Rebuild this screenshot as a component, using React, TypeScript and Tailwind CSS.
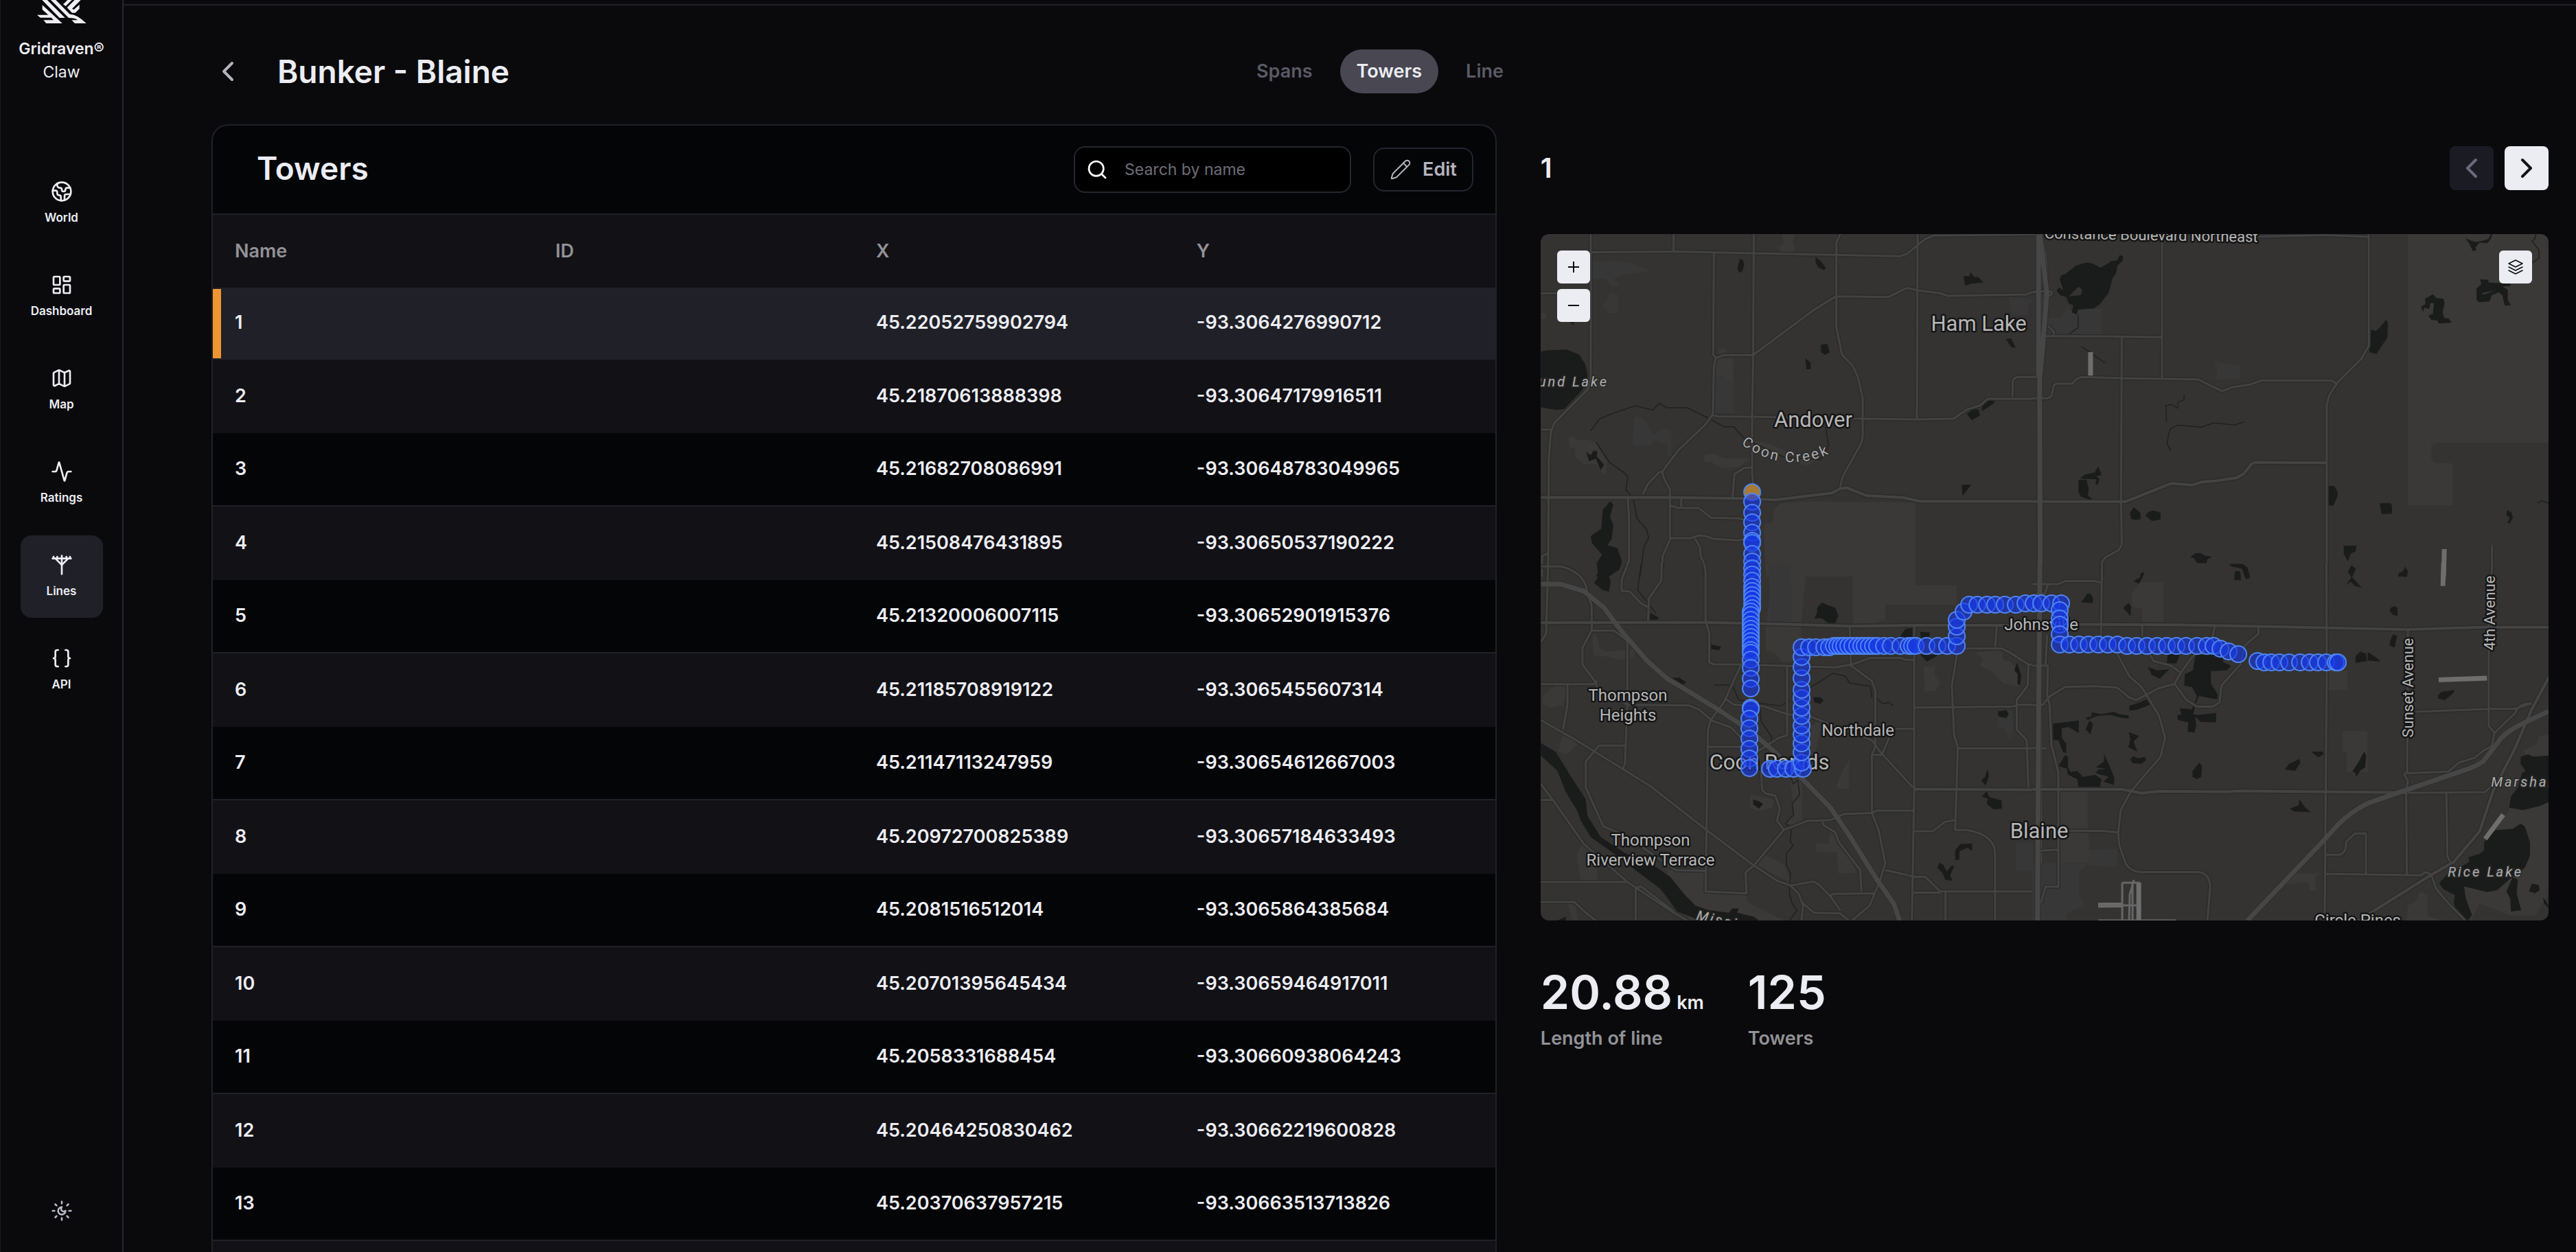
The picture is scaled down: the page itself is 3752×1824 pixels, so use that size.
import React from "react";
import {
  Activity,
  Braces,
  ChevronLeft,
  ChevronRight,
  Earth,
  LayoutDashboard,
  Map as MapIcon,
  Pencil,
  Search,
  UtilityPole,
} from "lucide-react";

const navItems = [
  { label: "World", icon: Earth },
  { label: "Dashboard", icon: LayoutDashboard },
  { label: "Map", icon: MapIcon },
  { label: "Ratings", icon: Activity },
  { label: "Lines", icon: UtilityPole, active: true },
  { label: "API", icon: Braces },
];

const tabs = [
  { label: "Spans" },
  { label: "Towers", active: true },
  { label: "Line" },
];

const towers = [
  { name: "1", x: "45.22052759902794", y: "-93.3064276990712" },
  { name: "2", x: "45.21870613888398", y: "-93.30647179916511" },
  { name: "3", x: "45.21682708086991", y: "-93.30648783049965" },
  { name: "4", x: "45.21508476431895", y: "-93.30650537190222" },
  { name: "5", x: "45.21320006007115", y: "-93.30652901915376" },
  { name: "6", x: "45.21185708919122", y: "-93.3065455607314" },
  { name: "7", x: "45.21147113247959", y: "-93.30654612667003" },
  { name: "8", x: "45.20972700825389", y: "-93.30657184633493" },
  { name: "9", x: "45.2081516512014", y: "-93.3065864385684" },
  { name: "10", x: "45.20701395645434", y: "-93.30659464917011" },
  { name: "11", x: "45.2058331688454", y: "-93.30660938064243" },
  { name: "12", x: "45.20464250830462", y: "-93.30662219600828" },
  { name: "13", x: "45.20370637957215", y: "-93.30663513713826" },
  { name: "", x: "", y: "" },
];

function Logo() {
  return (
    <svg viewBox="40 0 216 102" className="h-[34px] w-[72px]" fill="#eeeef4" aria-hidden="true">
      <path d="M62 0H84L162 78H138Z" />
      <path d="M100 0H122L183 62Q214 62 255 102H205L191 88H218Q206 78 178 78Z" />
      <path d="M63 22L150 102H80L68 88H112L102 77H54L40 65H89L63 42Z" />
      <path d="M154 19L173 0H192L165 27Z" />
      <path d="M171 33L204 0H231L193 38L201 42L225 20V38L207 56H193Z" />
    </svg>
  );
}

function ThemeIcon() {
  return (
    <svg
      viewBox="0 0 24 24"
      className="size-8"
      fill="none"
      stroke="currentColor"
      strokeWidth={2}
      strokeLinecap="round"
      strokeLinejoin="round"
      aria-hidden="true"
    >
      <path d="M12 8a2.83 2.83 0 0 0 4 4 4 4 0 1 1-4-4" />
      <path d="M12 2v2M12 20v2M4.9 4.9l1.4 1.4M17.7 17.7l1.4 1.4M2 12h2M20 12h2M6.3 17.7l-1.4 1.4M19.1 4.9l-1.4 1.4" />
    </svg>
  );
}

function Sidebar() {
  return (
    <aside className="flex w-[180px] shrink-0 flex-col items-center border-r-2 border-l border-[#26262e] border-l-[#1c1c20] pb-11">
      <Logo />
      <div className="mt-5 text-center text-[23px] leading-[34px]">
        <div className="font-semibold">Gridraven®</div>
        <div>Claw</div>
      </div>
      <nav className="mt-[114px] flex flex-col gap-4">
        {navItems.map(({ label, icon: Icon, active }) => (
          <a
            key={label}
            href="#"
            className={
              active
                ? "flex size-[120px] flex-col items-center gap-2.5 rounded-2xl bg-[#202128] pt-[27px]"
                : "flex size-[120px] flex-col items-center gap-2.5 rounded-2xl pt-[27px]"
            }
          >
            <Icon size={32} strokeWidth={2} />
            <span className="text-[17px] leading-6 font-semibold">{label}</span>
          </a>
        ))}
      </nav>
      <button type="button" aria-label="Toggle theme" className="mt-auto text-[#b9b9c6]">
        <ThemeIcon />
      </button>
    </aside>
  );
}

function TowersTable() {
  return (
    <section className="overflow-hidden rounded-t-3xl border-2 border-b-0 border-[#202128] bg-[#040507]">
      <div className="flex h-[130px] items-center border-b-2 border-[#202128] pr-8 pl-16">
        <h2 className="pb-1 text-[46px] font-semibold">Towers</h2>
        <div className="ml-auto flex items-center gap-8">
          <label className="flex h-[68px] w-[404px] items-center gap-6 rounded-2xl border-2 border-[#25262e] bg-black pr-4 pl-4">
            <Search size={32} className="shrink-0 text-white" />
            <input
              type="text"
              aria-label="Search by name"
              placeholder="Search by name"
              className="w-full min-w-0 bg-transparent text-[23px] outline-none placeholder:text-[#6d6d78]"
            />
          </label>
          <button
            type="button"
            className="flex h-16 items-center gap-4 rounded-2xl border-2 border-[#25262e] px-[22px] text-[27px] font-semibold text-[#b4b4c0]"
          >
            <Pencil size={32} strokeWidth={1.5} />
            Edit
          </button>
        </div>
      </div>
      <table className="w-full table-fixed text-left text-[27px] font-semibold">
        <thead>
          <tr className="h-[106px] bg-[#121116] text-[#929297]">
            {["Name", "ID", "X", "Y"].map((h) => (
              <th key={h} scope="col" className="pl-8 font-semibold">
                {h}
              </th>
            ))}
          </tr>
        </thead>
        <tbody>
          {towers.map((t, i) => (
            <tr
              key={i}
              className={
                i === 0
                  ? "h-[104px] bg-[#202128]"
                  : i % 2 === 1
                    ? "h-[108px] border-t-2 border-[#202128] bg-[#121116]"
                    : "h-[106px]"
              }
            >
              <td className="relative pl-8">
                {i === 0 && <span className="absolute top-0.5 bottom-0 left-0 w-3 bg-[#ef9631]" />}
                {t.name}
              </td>
              <td className="pl-8" />
              <td className="pl-8">{t.x}</td>
              <td className="pl-8">{t.y}</td>
            </tr>
          ))}
        </tbody>
      </table>
    </section>
  );
}

type Tile = {
  matrix: string;
  parks: string;
  urban: string;
  water: string;
  streams: string;
  roads: string;
  arterials: string;
  highways: string;
  runways: string;
};

const tiles: Tile[] = [
  {
    matrix: "matrix(0.48469 0 0 0.33333 -24 -21)",
    parks:
      "M775 63H815L807 95L814 140L770 142L765 120L780 105Z M585 567H608V590H585Z M572 605H629L627 715L600 705L595 685L572 683Z M135 948L170 965L185 960L215 972L225 1000L250 1060L244 1118L215 1070L180 1068L153 1040V1000L135 993Z M540 1030L565 1022L600 1042L680 1045L645 1080L598 1087L560 1058L543 1062Z M690 965L740 980L800 1020L880 1045L855 1075L800 1060L740 1015L700 1000Z M50 408H70L63 434H50Z M720 1330L745 1325L750 1270L770 1240L880 1230L935 1235H1175V1560H725Z",
    urban:
      "M205 180L240 185L260 178L325 190L380 225L290 240L270 260L290 290L268 294L240 258L205 262Z M260 322L285 330V408H252L236 375Z M572 685L600 690L629 715V845H572Z M330 865Q350 850 365 885L390 940L425 908L443 925V1040L432 1030V985L390 960L383 988L325 990Z M1455 335L1530 350L1512 380L1515 418H1462Z",
    water:
      "M50 577L70 571L130 568L165 590L183 630L190 670V700L175 745L120 828L95 832L50 820Z M258 1231L268 1245L258 1300L268 1335L263 1395L250 1423L280 1435L293 1490L285 1530L255 1560H215L222 1545L218 1500L234 1465L203 1412L200 1383L232 1350L236 1268Z M648 171L658 178L661 200L655 230H645L640 215Z M875 162L893 185L907 212L900 221L885 210L876 190Z M1320 248L1338 246L1341 229L1352 250L1365 252L1380 275L1345 280L1325 288Z M892 546L911 543L918 580L905 591L892 580Z M845 606L861 625V654H848Z M1447 522L1463 518L1477 560L1464 558Z M1330 850L1350 826L1365 830L1370 855L1345 877Z M1395 789H1415L1410 805L1375 837L1377 815Z M1315 1158H1344L1317 1208Z M186 1014L200 1030L209 1009L220 1013L218 1035L240 1070L230 1095L215 1045L195 1055Z M138 448H150L147 462Z",
    streams:
      "M200 923L227 870L270 845L333 814L387 832L406 802L427 822H490L560 873L600 905H630L660 955L780 1038L890 1050L915 990L905 905 M216 972L257 1062L298 1103L311 1122L306 1182L327 1215L339 1306L367 1352L374 1390L360 1430L348 1560",
    roads:
      "M200 63V700L192 740L90 890L80 930L74 1050L72 1560 M449 63V135 M200 143L460 140L690 147L930 154L1128 160L1150 150L1205 85L1228 70L1568 64 M690 63L688 590L685 860V1110L688 1160 M950 63L938 100V470L955 590L988 640L1003 690L1017 780V950L1012 980L958 1120L949 1170 M1182 63V120L1180 870 M570 147L568 590L576 605L600 592H688L870 395L937 335L1095 338L1140 305L1155 299L1180 308L1250 322L1272 333L1510 327L1535 312H1568 M576 605L570 640L567 850L545 895L465 1005L425 1080L415 1105L420 1130L438 1180V1400L416 1470L413 1560 M415 1100L405 1105L372 1155L357 1200 M562 855L585 860L700 862L1018 870L1180 873L1290 870L1330 830L1370 812L1393 783H1568 M1467 775L1468 710Q1470 690 1485 688H1535L1545 670 M50 322H100 M50 917H80 M686 1083L662 1085L632 1112L626 1215 M472 1215V1255 M440 1250L460 1259L525 1261L562 1303L645 1306L660 1312 M437 1392H500L525 1380L545 1383L568 1395L640 1402L660 1398 M513 1393L528 1430L530 1470L540 1500L543 1560 M311 1215L315 1300V1490L300 1540L293 1560 M50 1515H110Q150 1530 170 1560 M54 1560V1470L70 1460",
    arterials:
      "M50 1214H440L660 1219L755 1225L925 1195L950 1175L970 1172L1028 1206L1140 1215L1190 1231H1568",
    highways: "M1549 63V1560 M1549 63L1562 150L1568 260L1560 560L1550 700",
    runways: "",
  },
  {
    matrix: "matrix(0.5051 0 0 0.33333 716 -21)",
    parks:
      "M1083 63H1489V975H1165L1151 985V1050L1160 1064H1211V1248H1083Z",
    urban: "M45 432L80 430L97 405L95 360L110 400L130 395L200 388V505H45Z M524 618L560 632L600 635V698H528L535 660Z",
    water:
      "M155 188L175 192L197 210L228 182L245 178L252 155L262 160L260 180L245 202L242 232L232 255L220 320L195 370L178 388L132 393L128 415L114 405L118 375L105 365L98 338L80 330L70 310L78 297L90 310L79 262L85 242L95 238L125 202ZM105 335L140 330L144 310L137 295L130 298Z M1020 438L1025 450L1024 515L992 587L972 580V490L980 480L990 487L1000 475Z M1155 326L1165 343L1185 345L1189 365L1183 405L1188 430L1200 432L1210 450L1172 454L1168 440L1150 438L1142 420L1155 410L1158 365L1148 365L1145 390L1130 385L1127 405L1121 380L1133 370V345Z M1291 261L1315 263V275L1345 278L1380 280L1378 290L1355 292L1371 306V350L1380 375H1362L1355 330L1345 318L1325 330L1318 358L1287 360L1281 350V300L1295 283ZM1296 320L1335 310L1300 328Z M1250 82L1265 92L1280 98L1300 92L1315 85L1322 63H1326L1322 85L1312 103L1290 100L1278 122L1280 135L1270 137L1262 110Z M190 1078L200 1117L185 1120L194 1135L188 1160L182 1155L185 1135L138 1132L150 1115L180 1105Z M133 1138L156 1136L163 1178L160 1205L172 1220L163 1223L140 1210L133 1190Z M293 1257L312 1282L313 1308L300 1313L285 1308L281 1280Z M350 1271L370 1280V1310L345 1317L327 1295Q330 1275 350 1271Z M853 1163L872 1165L882 1200L868 1250L853 1247Z M1002 1240L1033 1238L1037 1250V1285L1007 1288Z M1370 1269L1382 1280L1386 1303L1376 1328L1370 1325L1377 1303L1366 1290Z M898 1425H935L932 1450L918 1460L910 1495L898 1460Z M455 1475L470 1458L485 1457L500 1470L518 1472L505 1485L502 1502L475 1500L465 1478Z M920 1511L933 1525L922 1560L910 1540Z M568 1505H605L620 1520L628 1560H615L605 1525L575 1515Z M585 1536H598L602 1560H583Z M1075 1518L1083 1535L1080 1560H1055L1057 1545L1068 1540Z M320 1538L322 1555H308Z",
    streams:
      "M1451 63V80L1441 95L1460 130L1462 168L1440 190 M132 415V472L107 500 M141 554L210 627 M438 765V787L421 797L419 824L403 808L385 813L387 885 M611 884L583 898L523 888L488 907L418 898L397 916L388 977L399 1010 M1457 1238L1468 1228L1489 1240",
    roads:
      "M374 92V690 M970 63V552L948 610L880 712L857 765L849 810V1560 M620 75L850 68L970 75 M258 515L256 1230L258 1420L250 1443L212 1475L201 1495V1560 M40 509L200 510L375 514 M46 465L62 490V503 M0 318L15 313L55 315L57 325L45 335 M0 688H10L18 670 M0 781H45L55 772L62 725L68 717H115L127 697L140 688L257 693L478 698L545 748L553 747L575 733L630 720L660 703H862L878 717 M1326 1422L1324 1560",
    arterials:
      "M0 1232H270L400 1153L462 1160L488 1147L525 1142L590 1128L610 1110L632 1068L642 1061L849 1063",
    highways: "M22 63L42 320L30 560L21 700L23 1560 M18 63V680",
    runways: "M168 579V682 M1188 1440L1186 1560",
  },
  {
    matrix: "matrix(0.48469 0 0 0.34439 -24 479)",
    parks:
      "M750 0H850L832 265L830 420H775L750 380L725 370V270L735 180Z M985 0H1175V95H1300V178H1085V240L1050 258H988Z M205 300L220 315L225 360L250 375L330 365V400L290 410L240 395L208 392Z M55 560L95 520L130 515L118 600L80 612L55 600Z M1200 437L1235 440V480L1250 505L1238 540L1203 547Z M1355 380L1410 370L1435 375L1440 410L1460 420L1485 455V522L1440 510L1405 460L1370 435L1380 405Z M980 830L960 870L938 945L942 955H976V870Z M175 1185L158 1240L170 1343H220V1240Z M430 1290L545 1305V1390L670 1400V1435L780 1513H500L430 1400Z M875 1185L915 1188L920 1140L940 1150L1000 1310L943 1313L940 1225L878 1222Z M800 915H835V1090L800 1110L785 1100L810 1060Z M680 980L715 990L750 1000L745 1035L710 1050L678 1035Z M725 1235L780 1275L800 1350L760 1325L700 1280Z M130 720L165 760L130 810L102 800L112 740Z M895 660L880 780L862 840V690Z M130 1440L155 1450L160 1513H145Z",
    urban:
      "M735 0H800L805 250H740Z M1425 620H1465L1470 700L1460 750L1440 700L1420 690Z M1478 1185H1530V1305H1478Z",
    water:
      "M50 762L95 800L130 880L185 1000L190 1070L230 1160L300 1225L400 1290L440 1330L480 1400L515 1450L550 1468L615 1480L625 1462H645L640 1480L670 1490L690 1497L705 1513H530L460 1475L410 1380L330 1295L270 1230L200 1160L170 1090L160 1050L125 970L100 880L50 815Z M220 0H293L285 30L250 48L260 75L255 122L235 115L210 85L222 60Z M895 168L910 178L935 190L944 225L935 255L915 257L895 235L872 235L880 212L880 190Z M377 210L405 232L400 240L375 240Z M558 345L592 355L585 370L562 365Z M443 488L465 485L487 505L478 515Z M868 568L890 568L900 582L890 597L872 590Z M688 1001L705 1008L718 1020L705 1040L688 1022Z M1130 310L1145 280L1168 275V315H1130Z M1190 292L1220 295L1215 318H1192Z M1190 388L1245 390L1210 418Z M1480 422L1488 450L1494 480L1490 517L1482 512L1483 470L1473 455Z M1423 628L1450 623L1456 640L1448 657L1425 650Z M1392 872L1397 900L1387 942L1373 920L1385 905Z M1390 966L1397 990L1435 1005V1040L1410 1042L1390 1020L1393 998L1375 988Z M1346 1187V1218L1332 1205L1308 1220V1255L1295 1258V1215L1310 1190Z M1248 1268L1260 1280L1270 1305L1285 1280L1292 1285L1280 1320L1287 1345L1265 1340L1258 1315L1242 1290Z M100 1513L125 1497V1513Z",
    streams:
      "M352 0L341 115L397 215 M570 517H625L645 580L690 590L770 605L798 582 M708 620L712 670L743 735V790L800 900L808 935L822 920L828 980L805 1020L810 1065L785 1103L803 1120L800 1180L808 1195L788 1230V1280L800 1310L797 1400L805 1440L820 1470L797 1513 M857 530L928 467L965 480L978 508L1040 522L1045 570 M1060 573L1076 595L1097 590L1108 603",
    roads:
      "M72 0L66 300L50 335 M50 15H110Q185 40 190 130L203 180V285L175 360V430L215 505L220 530L310 600L495 603L525 620L565 668L620 695L660 750 M310 10L293 70V118L318 122L350 170L370 187 M413 0L412 75L375 150L372 245 M540 0L545 35V240L556 300V420L570 430H652L935 442L985 430L1040 402H1130L1145 410H1170 M200 287H270L310 330V600L303 850L295 875 M50 513H210L220 500 M130 517V600L117 705 M655 420L600 590L560 665L552 710L548 1130L545 1390L668 1398L665 1310L690 1280 M605 575L630 600L720 607L790 640L860 650L1045 750 M790 435V730L765 740L705 795 M50 665L150 745L380 945L548 1130L690 1280L760 1345L800 1365L825 1400L838 1450L833 1513 M305 773H225L185 840V950L238 1115L300 1150L455 1300L545 1303 M50 935L90 1010L180 1190L310 1350L450 1480L490 1513 M50 1003H88 M50 1350H310 M335 1513V1375L350 1368L450 1475 M50 1434H150L185 1480L215 1513 M553 778H650 M712 880L715 960L725 975L755 985L768 1040L760 1090L780 1130L690 1280 M780 1130L850 1092L920 1088L960 1063L1045 1058L1060 1048H1168 M895 1090L900 1110L935 1140L945 1180L1010 1300L1013 1390 M1045 1058L1065 1130L1085 1270L1070 1340L1038 1450L985 1513 M800 1365L870 1348L885 1360L920 1410L950 1470 M838 1440L870 1480L950 1483L975 1513 M915 1410L930 1400L1050 1398 M1085 1300L1135 1315L1170 1328H1205L1250 1390H1568 M1172 260V950L1165 1513 M978 268L982 435L1045 500L1055 540V780L1045 810V1058 M1045 750L1070 800L1168 950 M1045 812H1075L1105 710L1120 702H1170 M1300 390L1285 520L1292 730L1303 780L1295 1130H1330Q1415 1150 1415 1230V1513 M1172 1135H1228L1265 1095L1295 1088 M1305 785H1568 M1172 612L1465 608L1490 600H1568 M1420 265L1415 355 M1320 362H1435L1460 380L1515 430H1568 M1515 435L1513 520L1480 580V705L1510 750L1515 950 M1266 1395V1513 M1170 1395H1250",
    arterials:
      "M50 253L545 252L720 257L980 268L1175 264H1568 M1170 957L1568 960",
    highways:
      "M50 90H110L180 120L240 190L290 285L370 415L430 490L560 600L680 710L760 810L840 920L920 1035L980 1160L1060 1340L1110 1440L1128 1513 M1549 0V1513",
    runways: "",
  },
  {
    matrix: "matrix(0.5051 0 0 0.34439 716 479)",
    parks:
      "M313 81H378V252H317V195L287 185V128Z M895 710L966 712V885H907V805L895 795Z M855 455H909V537H855Z M80 965H160V1120L165 1215L245 1210L160 1270H80Z M1385 1020L1489 1010V1400L1450 1493H1380L1290 1440L1265 1513L1240 1370L1340 1120L1360 1080Z M1489 725L1460 735L1455 765L1415 795L1425 815L1489 820Z M760 1313H835L815 1330L820 1385H800L795 1350L730 1362Z M1078 1513L1083 1450L1105 1430L1120 1390L1140 1410V1493L1180 1513Z",
    urban: "M0 1270H160L135 1310V1400L150 1450L100 1480V1513H0Z M165 1215L245 1210V1285L165 1280Z",
    water:
      "M1408 820L1430 810L1445 820L1489 815V1012L1460 1030L1415 1046L1375 1035L1380 990L1400 950L1412 890L1423 880L1408 850Z M1408 1103L1420 1115L1435 1180V1240L1420 1290L1375 1340L1340 1385L1310 1392L1245 1368L1250 1420L1268 1490L1255 1513L1230 1490L1215 1440L1218 1405L1185 1380L1173 1355L1195 1320L1260 1265L1258 1245L1290 1230L1303 1215V1180L1335 1130L1385 1125Z M1385 1330L1400 1340L1397 1400L1410 1470L1380 1475L1378 1420L1367 1390Z M1440 1357L1460 1362L1463 1385L1450 1397L1432 1390Z M1473 1415L1489 1450V1460L1475 1440Z M390 385L425 390L415 425L388 425Z M470 390L550 388V420L573 435L560 455L515 458V510L535 558L533 578L480 563L470 600L465 640L480 643L530 635V675L485 673L470 650L473 690L467 718L448 715L450 675L420 665L418 645L430 640L425 615L460 620L475 565L460 525L438 520L440 470L463 455Z M333 440L360 455L395 450L368 490L345 475Z M335 575L340 600L300 622L280 625V605L310 590Z M172 632L200 640L235 630L250 640L278 645V658L255 655L225 643L185 648L160 665L155 655L170 650Z M165 668L175 680L168 725L153 705Z M60 680L134 667V720L105 695L85 700V740L98 765V805L88 800L75 750H60Z M95 812L103 820V865L110 885L130 880L145 905L182 897L200 915L195 948H133L130 915L102 895L100 870L75 860Z M207 808L220 850L237 910L235 940L205 925L220 905L183 890L190 875L215 870L183 865L207 840Z M278 715L308 733L292 755L303 798L277 780L283 745Z M290 817L305 827L325 820L328 835L315 850L290 848L282 833Z M482 845L490 860L487 905L475 915L462 905V880Z M158 130H168L175 150V170L140 167L150 150Z M278 170L285 185L283 225L262 190Z M320 36L318 60L308 88L292 78L310 62Z M583 40H598L602 73H583Z M568 5H608L620 20L628 65L615 68L605 25L575 15Z M920 12L933 25L922 60L950 105L930 98L918 80L905 95L920 60L910 40Z M1075 17L1083 40L1078 60L1055 52L1057 42L1068 38Z M1033 190L1045 183L1053 190V225L1040 220L1030 203Z M1040 303L1052 308L1045 358L1030 350L1032 330Z M932 395L945 375L962 383L965 415L932 423Z M967 377L980 390L1001 410V418L967 413Z M1180 545L1217 538L1215 550L1190 580L1170 575V560Z M805 800L835 798L841 808L825 823Z M728 875L740 850L770 830L773 845L758 880Z M957 797L963 815L960 865L945 880L935 905L930 885H922L940 845Z M770 1000L787 1035L803 1055L755 1052L742 1040L768 1025Z",
    streams: "",
    roads:
      "M201 0L198 310 M0 90H75L95 77H180L200 85 M45 90L37 130L0 135 M317 265V310 M527 265L520 310L460 400L428 465L410 510 M652 272V300L612 350L600 430L545 520L540 590L520 608H475L445 580L410 512L365 530L320 565L300 580L280 570L245 528L180 522L95 525L50 565L30 600L0 602 M245 385L280 480L315 525L365 645L383 740L370 820L285 965L255 1045L248 1140L250 1190L270 1275Q285 1305 310 1308H480Q512 1315 513 1370L505 1513 M340 390L350 415L400 435L428 465 M0 435H45L43 560L50 600L55 770L75 885V1370H38L25 1440 M43 305L38 430 M848 0L849 460L843 1513 M1083 280L1081 885L1072 895L1083 920L1078 970L1080 1320 M1326 0L1316 280V690L1333 720L1325 775L1300 795L1275 825L1230 845L1200 883L1081 890 M1105 630L1315 618H1390L1440 595 M1333 720L1360 680L1390 640Q1405 590 1440 595 M1083 973L1305 970L1320 950 M1194 975L1197 1240L1205 1265 M847 1235H885Q905 1230 905 1180L930 1145H962V1318 M845 1315L1120 1322L1135 1308L1150 1318L1165 1380L1200 1440L1248 1513 M0 783H15 M100 1133L205 1134L248 1140 M75 1213L20 1218",
    arterials:
      "M100 260L400 262L700 270L1080 282L1300 272H1489 M0 958H260L315 974L365 966L560 968L600 965L850 968L1081 972 M1489 485L1440 620L1390 790L1330 960L1290 1135L1215 1265L1150 1320L965 1490L940 1513",
    highways:
      "M22 0L18 700L15 1513 M1489 628L1420 675Q1370 710 1350 745L1300 840Q1280 860 1250 875L1080 960L970 1015Q920 1050 880 1110L840 1175L620 1513",
    runways:
      "M1186 0L1184 98 M1172 495L1311 488 M1358 1065L1306 1168 M307 1353V1513 M190 1448L258 1447",
  },
];

// Tower positions along the line, as [x, y] on the 1468 x 1000 map canvas.
const column = (x: number, ys: number[]) => ys.map((y) => [x, y]);
const row = (y: number, xs: number[]) => xs.map((x) => [x, y]);

const towerPins: number[][] = [
  ...column(308, [
    390, 406, 420, 435, 447, 450, 466, 477, 487, 496, 505, 514, 520, 526, 532, 539, 545,
  ]),
  ...column(306, [
    550, 555, 562, 569, 575, 581, 587, 593, 599, 606, 610, 620, 632, 648, 662, 690, 692,
  ]),
  ...column(304, [706, 720, 735, 750, 764, 778]),
  ...row(779, [334, 344, 357, 368, 382]),
  ...column(380, [770, 755, 742, 729, 716, 702, 690, 676, 664, 647, 631, 616]),
  ...row(602, [380, 391, 401, 413, 420]),
  ...row(600, [
    427, 432, 437, 442, 448, 454, 461, 467, 472, 478, 484, 490, 500, 510, 524, 536, 541, 546, 562,
    578, 592, 606,
  ]),
  ...column(606, [586, 572, 562]),
  [616, 550],
  ...row(540, [624, 636, 650, 662, 676, 692]),
  ...row(538, [706, 718, 729, 744, 758]),
  ...column(756, [548, 560, 569, 583, 598]),
  ...row(598, [770, 784, 798, 812, 826, 840]),
  ...row(600, [854, 868, 883, 898, 912, 926, 940, 956, 970, 980]),
  [990, 604],
  [1002, 608],
  [1016, 612],
  [1044, 622],
  ...row(624, [1054, 1064, 1076, 1090, 1106, 1120, 1132, 1144, 1158, 1161]),
];

function TileLayer({ tile }: { tile: Tile }) {
  const line = {
    fill: "none",
    vectorEffect: "non-scaling-stroke" as const,
    strokeLinejoin: "round" as const,
  };
  return (
    <g transform={tile.matrix}>
      <path d={tile.parks} fill="#3a3937" />
      <path d={tile.urban} fill="#373738" />
      <path d={tile.water} fill="#1a1c1b" fillRule="evenodd" />
      <path d={tile.streams} {...line} stroke="#20211f" strokeWidth={1.5} />
      <path d={tile.roads} {...line} stroke="#2c2c2b" strokeWidth={6} />
      <path d={tile.arterials} {...line} stroke="#2c2c2b" strokeWidth={7} />
      <path d={tile.highways} {...line} stroke="#2e2e2d" strokeWidth={9} />
      <path d={tile.roads} {...line} stroke="#424242" strokeWidth={3} />
      <path d={tile.arterials} {...line} stroke="#434343" strokeWidth={4} />
      <path d={tile.highways} {...line} stroke="#464646" strokeWidth={7} />
      <path d={tile.runways} {...line} stroke="#6e6e6e" strokeWidth={7} />
    </g>
  );
}

function LineMap() {
  return (
    <div className="relative h-[1000px] overflow-hidden rounded-xl bg-[#343332]">
      <svg
        viewBox="0 0 1468 1000"
        preserveAspectRatio="xMidYMid slice"
        className="size-full font-[Roboto,sans-serif]"
        role="img"
        aria-label="Map of the Bunker - Blaine line"
      >
        {tiles.map((tile) => (
          <TileLayer key={tile.matrix} tile={tile} />
        ))}
        <g fill="none" stroke="#666666">
          <path d="M847 945V1000M862 945V1000M864 941L858 962L857 1000" strokeWidth={3} />
          <path d="M847 945H873M812 978H870M812 1000H925" strokeWidth={3} />
        </g>
        <g
          fill="#b6b6b6"
          stroke="#161616"
          strokeWidth={5}
          strokeLinejoin="round"
          paintOrder="stroke"
          textAnchor="middle"
        >
          <g fontSize={31}>
            <text x={638} y={141}>Ham Lake</text>
            <text x={397} y={281}>Andover</text>
            <text x={333} y={780}>Coon Rapids</text>
            <text x={726} y={880}>Blaine</text>
          </g>
          <g fontSize={24}>
            <text x={127} y={680}>Thompson</text>
            <text x={127} y={709}>Heights</text>
            <text x={462} y={731}>Northdale</text>
            <text x={160} y={891}>Thompson</text>
            <text x={160} y={920}>Riverview Terrace</text>
            <text x={729} y={577}>Johnsville</text>
            <text x={1190} y={1008}>Circle Pines</text>
          </g>
          <g fontSize={22}>
            <text x={889} y={9} transform="rotate(1 889 9)">Constance Boulevard Northeast</text>
            <text transform="translate(1271 661) rotate(-90)">Sunset Avenue</text>
            <text transform="translate(1390 552) rotate(-90)">4th Avenue</text>
          </g>
        </g>
        <g
          fill="#adadad"
          stroke="#2a2a29"
          strokeWidth={3}
          paintOrder="stroke"
          fontSize={20}
          fontStyle="italic"
          className="tracking-[3px]"
        >
          <text x={99} y={222} textAnchor="end">Round Lake</text>
          <text x={1384} y={805}>Marshan Lake</text>
          <text x={1321} y={936}>Rice Lake</text>
          <text x={226} y={999} transform="rotate(12 226 999)">Mississippi River</text>
          <path id="creek" d="M292 306Q360 355 434 313" fill="none" stroke="none" />
          <text fontStyle="normal" fontSize={21}>
            <textPath href="#creek">Coon Creek</textPath>
          </text>
        </g>
        <circle cx={308} cy={376} r={12} fill="#a67a35" stroke="#4f85f5" strokeWidth={2} />
        <g fill="#1638e8" fillOpacity={0.62} stroke="#4f85f5" strokeWidth={2}>
          {towerPins.map(([x, y], i) => (
            <circle key={i} cx={x} cy={y} r={12} />
          ))}
        </g>
      </svg>
      <div className="absolute top-6 left-6 flex flex-col gap-2">
        <button
          type="button"
          aria-label="Zoom in"
          className="flex size-12 items-center justify-center rounded-md bg-[#ecedf3] text-[#0a0a0c]"
        >
          <svg viewBox="0 0 16 16" className="size-4" stroke="currentColor" strokeWidth={2} aria-hidden="true">
            <path d="M8 0V16M0 8H16" />
          </svg>
        </button>
        <button
          type="button"
          aria-label="Zoom out"
          className="flex size-12 items-center justify-center rounded-md bg-[#ecedf3] text-[#0a0a0c]"
        >
          <svg viewBox="0 0 16 16" className="size-4" stroke="currentColor" strokeWidth={2} aria-hidden="true">
            <path d="M0 8H16" />
          </svg>
        </button>
      </div>
      <button
        type="button"
        aria-label="Map layers"
        className="absolute top-6 right-6 flex size-12 items-center justify-center rounded-md bg-[#ecedf3] text-[#0a0a0c]"
      >
        <svg
          viewBox="0 0 24 24"
          className="size-6"
          fill="none"
          stroke="currentColor"
          strokeWidth={1.5}
          strokeLinecap="round"
          strokeLinejoin="round"
          aria-hidden="true"
        >
          <path d="M12 2L2 7L12 12L22 7Z" />
          <path d="M2 12L12 17L22 12" />
          <path d="M2 17L12 22L22 17" />
        </svg>
      </button>
    </div>
  );
}

function Details() {
  return (
    <section className="pt-8">
      <div className="flex items-center gap-4">
        <h2 className="mr-auto text-[40px] leading-[48px] font-semibold">1</h2>
        <button
          type="button"
          aria-label="Previous tower"
          disabled
          className="flex size-16 items-center justify-center rounded-lg bg-[#1b1b24] text-[#6a6a7a]"
        >
          <ChevronLeft size={48} />
        </button>
        <button
          type="button"
          aria-label="Next tower"
          className="flex size-16 items-center justify-center rounded-lg bg-[#ecedf3] text-[#121217]"
        >
          <ChevronRight size={48} />
        </button>
      </div>
      <div className="mt-16">
        <LineMap />
      </div>
      <dl className="mt-16 flex gap-16">
        <div className="flex flex-col-reverse gap-2">
          <dt className="text-[27px] leading-10 font-semibold text-[#929297]">Length of line</dt>
          <dd className="text-[68px] leading-[80px] font-semibold">
            20.88<span className="ml-1.5 text-[27px] leading-10">km</span>
          </dd>
        </div>
        <div className="flex flex-col-reverse gap-2">
          <dt className="text-[27px] leading-10 font-semibold text-[#929297]">Towers</dt>
          <dd className="text-[68px] leading-[80px] font-semibold">125</dd>
        </div>
      </dl>
    </section>
  );
}

export default function App() {
  return (
    <div className="flex h-screen overflow-hidden bg-[#0a0a0c] font-[Inter,sans-serif] text-[#ecedf3]">
      <Sidebar />
      <main className="mt-1.5 min-w-0 flex-1 border-t-2 border-[#202128] pr-10 pl-32">
        <header className="grid grid-cols-[1fr_auto_1fr] items-center pt-16 pb-[45px]">
          <div className="flex items-center gap-12">
            <button type="button" aria-label="Back" className="text-[#b4b4c0]">
              <ChevronLeft size={48} />
            </button>
            <h1 className="text-[46px] leading-[64px] font-semibold">Bunker - Blaine</h1>
          </div>
          <nav className="flex gap-4">
            {tabs.map((tab) => (
              <button
                key={tab.label}
                type="button"
                className={
                  tab.active
                    ? "h-16 rounded-full bg-[#484752] px-6 text-[27px] font-semibold"
                    : "h-16 rounded-full px-6 text-[27px] font-semibold text-[#5b5b66]"
                }
              >
                {tab.label}
              </button>
            ))}
          </nav>
        </header>
        <div className="grid grid-cols-[51fr_40fr] items-start gap-16">
          <TowersTable />
          <Details />
        </div>
      </main>
    </div>
  );
}
